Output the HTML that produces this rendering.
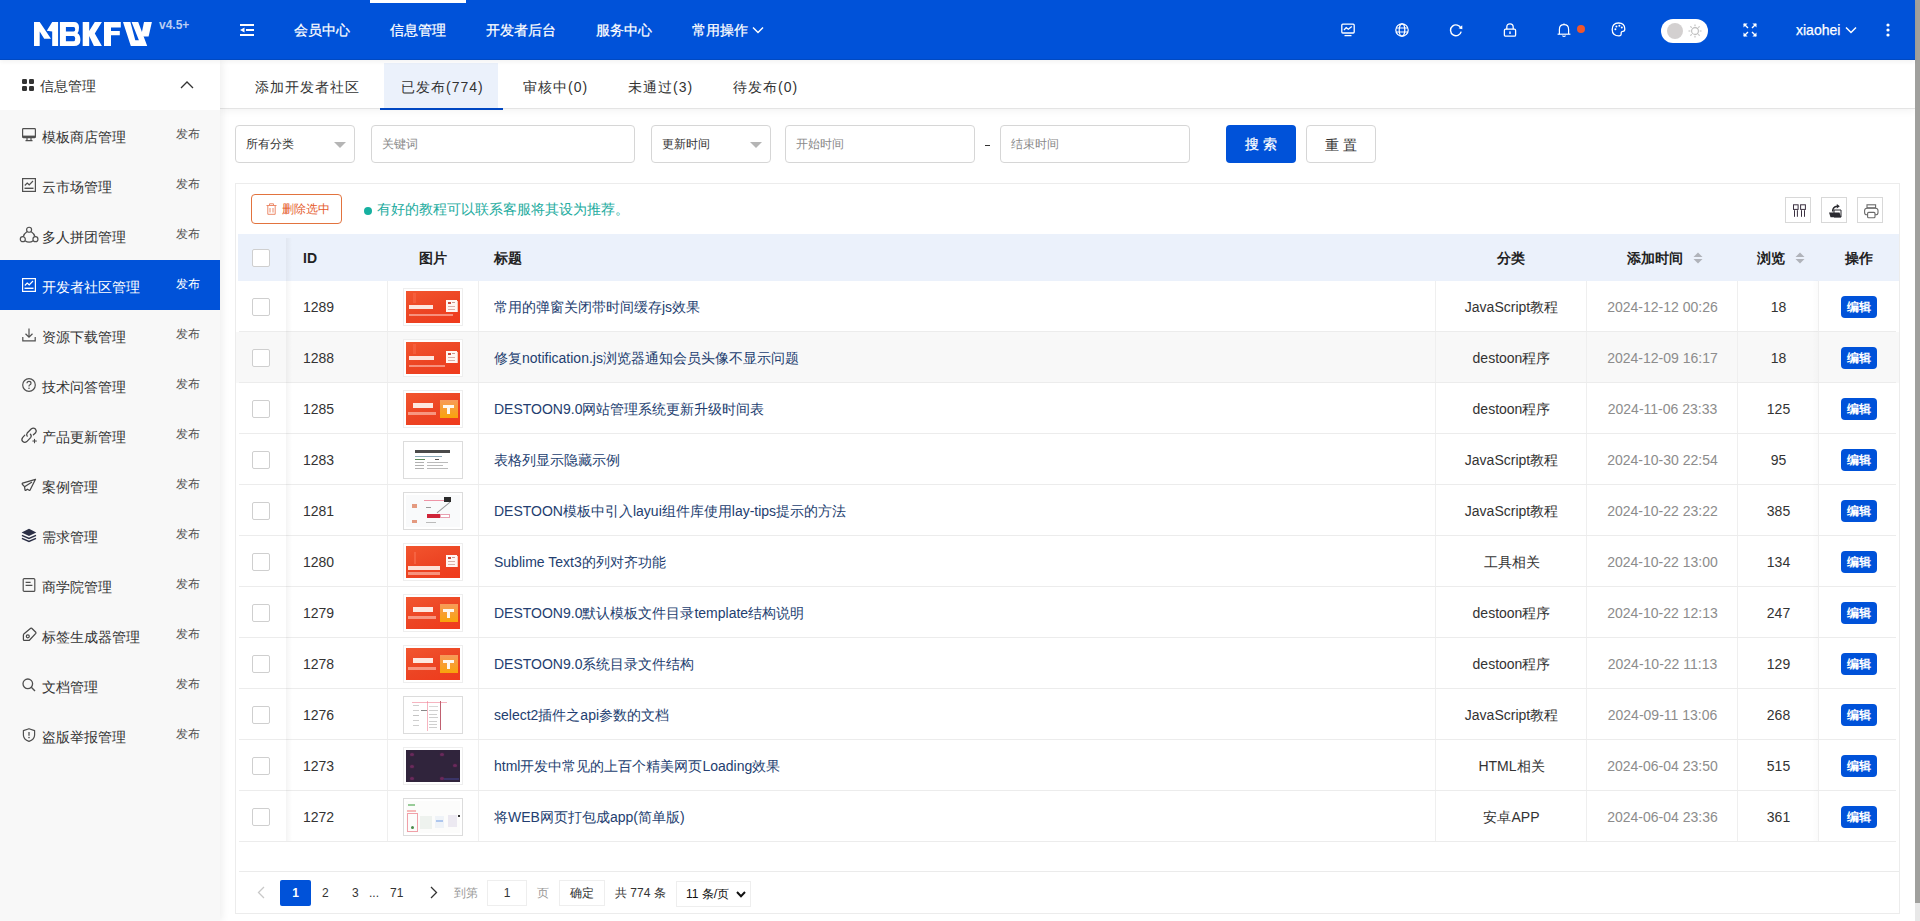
<!DOCTYPE html>
<html><head><meta charset="utf-8">
<style>
*{box-sizing:border-box;margin:0;padding:0}
html,body{width:1920px;height:921px;overflow:hidden;background:#fff;font-family:"Liberation Sans",sans-serif;font-size:14px;color:#333}
.abs{position:absolute}
#hdr{position:absolute;left:0;top:0;width:1915px;height:60px;background:#0052d9;color:#fff;z-index:10;box-shadow:inset 0 -1px 0 rgba(0,0,0,.1),0 2px 4px rgba(0,0,0,.05)}
#hdr .nav{position:absolute;top:0;height:60px;line-height:60px;white-space:nowrap;-webkit-text-stroke:0.25px #fff}
#sb{position:absolute;left:1915px;top:0;width:5px;height:921px;background:#e8e8e8}
#sb i{position:absolute;left:0;top:0;width:5px;height:903px;background:#a0a09d}
#side{position:absolute;left:0;top:60px;width:220px;height:861px;background:#f8f8f8;box-shadow:2px 0 8px rgba(0,0,0,.07);z-index:5}
.si{position:absolute;left:0;width:220px;height:50px}
.si .t{position:absolute;left:42px;top:2px;line-height:50px;font-size:14px;color:#333;white-space:nowrap}
.si .p{position:absolute;left:176px;top:2px;line-height:44px;font-size:12px;color:#555}
.si svg{position:absolute;left:22px;top:18px}
.si.on{background:#0052d9}
.si.on .t,.si.on .p{color:#fff}

#main{position:absolute;left:220px;top:60px;width:1695px;height:861px;background:#fff;overflow:hidden}
#tabs{position:absolute;left:0;top:0;width:1695px;height:49px;background:#fff;border-bottom:1px solid #e4e4e4;box-shadow:0 2px 8px rgba(0,0,0,.05)}
.tab{position:absolute;top:3px;line-height:48px;font-size:14px;letter-spacing:1px;color:#333;white-space:nowrap}
.inp{position:absolute;top:65px;height:38px;border:1px solid #d6d6d6;border-radius:4px;background:#fff;font-size:12px;line-height:36px;padding-left:10px;white-space:nowrap}
.inp.ph{color:#8a8a8a}
.caret{position:absolute;top:16px;width:0;height:0;border-left:6px solid transparent;border-right:6px solid transparent;border-top:6px solid #b5b5b5}
.btn{position:absolute;top:65px;height:38px;border-radius:4px;font-size:14px;line-height:36px;padding-top:1px;text-align:center;letter-spacing:4px;text-indent:4px}
#card{position:absolute;left:15px;top:123px;width:1665px;height:731px;border:1px solid #ececec;background:#fff}
.row{position:absolute;left:0;width:1663px;height:51px}
.row::after{content:'';position:absolute;left:3px;right:3px;bottom:0;height:1px;background:#ececec}
.c{position:absolute;top:1px;height:50px;line-height:50px;white-space:nowrap;font-size:14px}
.vl{position:absolute;top:0;width:1px;height:50px;background:#efefef}
.cb{position:absolute;left:16px;top:17px;width:18px;height:18px;border:1px solid #cfcfcf;border-radius:2px;background:#fff}
.th{position:absolute;top:1px;height:46px;line-height:46px;font-weight:bold;font-size:14px;color:#222;white-space:nowrap}
.edit{position:absolute;left:1605px;top:15px;width:36px;height:22px;border-radius:4px;background:#0052d9;color:#fff;font-size:12px;line-height:22px;text-align:center;font-weight:bold}
.thumb{position:absolute;left:167px;top:7px;width:60px;height:38px;border:1px solid #eee;background:#fff;padding:2px}
.thumb i{display:block;width:54px;height:32px;position:relative;overflow:hidden}
.tool{position:absolute;top:13px;width:26px;height:26px;border:1px solid #d8d8d8;background:#fff}
.sort{position:absolute;top:18px;width:10px;height:12px}
.pg{position:absolute;top:8px;height:26px;line-height:26px;font-size:12px;color:#333;white-space:nowrap}
</style></head><body>
<div id="hdr">
  <svg class="abs" style="left:0;top:0" width="200" height="60" viewBox="0 0 200 60">
    <g fill="#fff">
      <polygon points="34,22 39.7,22 51,38.8 44.2,38.8 39.7,31.5 39.7,46 34,46"/>
      <polygon points="46.8,30.8 52.2,22 58.1,22 58.1,46 52.2,46 52.2,31.5"/>
      <path d="M59.9,22 H74 Q79,22 79,27.5 Q79,31.5 77.5,33.3 Q80.4,35 80.4,40 Q80.4,46 74,46 H59.9 Z M65.9,27.1 V31.5 H73.6 Q75.2,31.5 75.2,29.3 Q75.2,27.1 73.6,27.1 Z M65.9,35.9 V41.3 H73.6 Q75.2,41.3 75.2,38.6 Q75.2,35.9 73.6,35.9 Z" fill-rule="evenodd"/>
      <polygon points="82.7,22 89.2,22 89.2,30.9 94.8,22 101.9,22 94.8,33.6 101.9,46 93.9,46 89.2,36 89.2,46 82.7,46"/>
      <polygon points="104,22 120.8,22 120.8,27.4 111,27.4 111,30.9 119.8,30.9 119.8,35.2 111,35.2 111,46 104,46"/>
      <polygon points="123,22 130.4,22 135.3,40.3 138.9,40.3 131.6,22 138.2,22 147.2,46 130.8,46"/>
      <polygon points="144,22 151.9,22 148.6,36.4 141,36.4"/>
    </g>
    <text x="159" y="29" font-family="Liberation Sans" font-size="12" font-weight="bold" fill="#b9cdf3">v4.5+</text>
  </svg>
  <svg class="abs" style="left:240px;top:24px" width="14" height="12" viewBox="0 0 14 12"><g fill="#fff"><rect x="0" y="0" width="14" height="2"/><rect x="6" y="5" width="8" height="2"/><rect x="0" y="10" width="14" height="2"/><polygon points="0,6 4.5,3.5 4.5,8.5"/></g></svg>
  <div class="abs" style="left:370px;top:0;width:96px;height:3px;background:#fff"></div>
  <div class="nav" style="left:294px">会员中心</div>
  <div class="nav" style="left:390px">信息管理</div>
  <div class="nav" style="left:486px">开发者后台</div>
  <div class="nav" style="left:596px">服务中心</div>
  <div class="nav" style="left:692px">常用操作</div>
  <svg class="abs" style="left:752px;top:26px" width="12" height="8" viewBox="0 0 12 8"><polyline points="1,1.5 6,6.5 11,1.5" fill="none" stroke="#fff" stroke-width="1.5"/></svg>
  <!-- right icons -->
  <svg class="abs" style="left:1341px;top:23px" width="14" height="14" viewBox="0 0 14 14"><g fill="none" stroke="#fff" stroke-width="1.3"><rect x="0.8" y="1.2" width="12.4" height="8.8" rx="1"/><polyline points="3,7 5.2,4.6 7.4,6.2 10.8,3.4"/><path d="M3.5,12.6 h7"/></g></svg>
  <svg class="abs" style="left:1395px;top:23px" width="14" height="14" viewBox="0 0 14 14"><g fill="none" stroke="#fff" stroke-width="1.2"><circle cx="7" cy="7" r="6.2"/><ellipse cx="7" cy="7" rx="2.8" ry="6.2"/><path d="M1,5 h12 M1,9 h12"/></g></svg>
  <svg class="abs" style="left:1449px;top:23px" width="14" height="14" viewBox="0 0 14 14"><g fill="none" stroke="#fff" stroke-width="1.4"><path d="M12,5.4 A5.4,5.4 0 1 0 12.2,8.6"/></g><polygon points="9.6,5.2 13.4,6.2 13.2,2.2" fill="#fff"/></svg>
  <svg class="abs" style="left:1503px;top:23px" width="14" height="14" viewBox="0 0 14 14"><g fill="none" stroke="#fff" stroke-width="1.3"><rect x="1.4" y="6.2" width="11.2" height="7" rx="1.2"/><path d="M3.8,6.2 V4.2 Q3.8,0.8 7,0.8 Q10.2,0.8 10.2,4.2 V6.2"/></g><rect x="6.3" y="8.4" width="1.4" height="2.6" fill="#fff"/></svg>
  <svg class="abs" style="left:1557px;top:23px" width="14" height="14" viewBox="0 0 14 14"><g fill="none" stroke="#fff" stroke-width="1.2"><path d="M2.4,11 V6.4 Q2.4,1.6 7,1.6 Q11.6,1.6 11.6,6.4 V11"/><path d="M0.6,11.2 h12.8"/><path d="M5.4,12.6 Q7,14 8.6,12.6"/><path d="M7,0.4 v1.2"/></g></svg>
  <div class="abs" style="left:1577px;top:25px;width:8px;height:8px;border-radius:50%;background:#f0562b"></div>
  <svg class="abs" style="left:1611px;top:22px" width="15" height="15" viewBox="0 0 15 15"><g fill="none" stroke="#fff" stroke-width="1.3"><path d="M7.5,1 Q13.8,1 13.8,7 Q13.8,9.4 12,9.4 Q10,9.4 10.2,11.4 Q10.4,13.8 8,13.8 Q1.2,13.8 1.2,7.4 Q1.2,1 7.5,1 Z"/></g><g fill="#fff"><circle cx="4.4" cy="7.2" r="1"/><circle cx="5.4" cy="4.4" r="1"/><circle cx="8.4" cy="3.8" r="1"/><circle cx="10.8" cy="5.6" r="1"/></g></svg>
  <div class="abs" style="left:1661px;top:19px;width:47px;height:24px;border-radius:12px;background:#fff"></div>
  <div class="abs" style="left:1667px;top:23px;width:16px;height:16px;border-radius:50%;background:#d3d0d0"></div>
  <svg class="abs" style="left:1688px;top:24px" width="14" height="14" viewBox="0 0 14 14"><g fill="none" stroke="#bdbdbd" stroke-width="1.1"><circle cx="7" cy="7" r="3.4"/><path d="M7,0.5 v1.8 M7,11.7 v1.8 M0.5,7 h1.8 M11.7,7 h1.8 M2.4,2.4 l1.3,1.3 M10.3,10.3 l1.3,1.3 M2.4,11.6 l1.3,-1.3 M10.3,3.7 l1.3,-1.3"/></g></svg>
  <svg class="abs" style="left:1743px;top:23px" width="14" height="14" viewBox="0 0 14 14"><g fill="none" stroke="#fff" stroke-width="1.4"><path d="M1,1 L5,5 M13,1 L9,5 M1,13 L5,9 M13,13 L9,9"/></g><g fill="#fff"><polygon points="0.5,0.5 4.6,0.5 0.5,4.6"/><polygon points="13.5,0.5 9.4,0.5 13.5,4.6"/><polygon points="0.5,13.5 4.6,13.5 0.5,9.4"/><polygon points="13.5,13.5 9.4,13.5 13.5,9.4"/></g></svg>
  <div class="nav" style="left:1796px">xiaohei</div>
  <svg class="abs" style="left:1845px;top:26px" width="12" height="8" viewBox="0 0 12 8"><polyline points="1,1.5 6,6.5 11,1.5" fill="none" stroke="#fff" stroke-width="1.5"/></svg>
  <svg class="abs" style="left:1886px;top:23px" width="4" height="14" viewBox="0 0 4 14"><g fill="#fff"><circle cx="2" cy="2" r="1.6"/><circle cx="2" cy="7" r="1.6"/><circle cx="2" cy="12" r="1.6"/></g></svg>
</div>
<div id="sb"><i></i></div>
<div id="side">
<div class="si" style="top:0;background:#fff"><svg width="12" height="12" viewBox="0 0 12 12" style="top:19px"><g fill="#333"><rect x="0" y="0" width="5" height="5" rx="1.2"/><rect x="7" y="0" width="5" height="5" rx="1.2"/><rect x="0" y="7" width="5" height="5" rx="1.2"/><rect x="7" y="7" width="5" height="5" rx="1.2"/></g></svg><div class="t" style="left:40px;top:1px">信息管理</div><svg width="14" height="8" viewBox="0 0 14 8" style="left:180px;top:21px"><polyline points="1,7 7,1 13,7" fill="none" stroke="#333" stroke-width="1.3"/></svg></div>
<div class="si" style="top:50px"><svg width="14" height="14" viewBox="0 0 14 14"><rect x="0.6" y="0.6" width="12.8" height="9" rx="0.8" fill="none" stroke="#505050" stroke-width="1.2"/><rect x="0.6" y="7.6" width="12.8" height="2" fill="#505050"/><path d="M5,10 v2.2 M9,10 v2.2 M3.5,12.6 h7" stroke="#505050" stroke-width="1.2"/></svg><div class="t">模板商店管理</div><div class="p">发布</div></div>
<div class="si" style="top:100px"><svg width="14" height="14" viewBox="0 0 14 14"><rect x="0.6" y="0.6" width="12.8" height="12.8" fill="none" stroke="#505050" stroke-width="1.2"/><polyline points="2.8,7.5 5.2,5 7.2,6.8 11,3" fill="none" stroke="#505050" stroke-width="1.2"/><rect x="2.5" y="9.6" width="9" height="1.4" fill="#505050"/></svg><div class="t">云市场管理</div><div class="p">发布</div></div>
<div class="si" style="top:150px"><svg width="20" height="18" viewBox="0 0 20 18" style="left:19px;top:16px"><g fill="none" stroke="#505050" stroke-width="1.2"><circle cx="10.1" cy="3.75" r="2.5"/><circle cx="3.8" cy="13.2" r="2.5"/><circle cx="16.45" cy="13.2" r="2.5"/><path d="M8.2,5.4 Q4.8,7.6 4.3,10.7 M12,5.4 Q15.4,7.6 15.9,10.7 M6,14.8 Q10.1,17.6 14.2,14.8"/></g></svg><div class="t">多人拼团管理</div><div class="p">发布</div></div>
<div class="si on" style="top:200px"><svg width="14" height="14" viewBox="0 0 14 14"><rect x="0.6" y="0.6" width="12.8" height="12.8" fill="none" stroke="#fff" stroke-width="1.2"/><polyline points="2.8,7.5 5.2,5 7.2,6.8 11,3" fill="none" stroke="#fff" stroke-width="1.2"/><rect x="2.5" y="9.6" width="9" height="1.4" fill="#fff"/></svg><div class="t">开发者社区管理</div><div class="p">发布</div></div>
<div class="si" style="top:250px"><svg width="14" height="14" viewBox="0 0 14 14"><path d="M7,0.5 v8.5 M3.5,5.8 L7,9.2 L10.5,5.8 M0.8,9 v3.8 h12.4 v-3.8" fill="none" stroke="#505050" stroke-width="1.2"/></svg><div class="t">资源下载管理</div><div class="p">发布</div></div>
<div class="si" style="top:300px"><svg width="14" height="14" viewBox="0 0 14 14"><circle cx="7" cy="7" r="6.3" fill="none" stroke="#505050" stroke-width="1.2"/><path d="M5,5.3 Q5,3.4 7,3.4 Q9,3.4 9,5.2 Q9,6.4 7.6,7 Q7,7.3 7,8.4" fill="none" stroke="#505050" stroke-width="1.2"/><circle cx="7" cy="10.3" r="0.8" fill="#505050"/></svg><div class="t">技术问答管理</div><div class="p">发布</div></div>
<div class="si" style="top:350px"><svg width="26" height="26" viewBox="0 0 26 26" style="left:16px;top:14px"><g fill="none" stroke="#484848" stroke-width="1.25" stroke-linecap="round"><path d="M11.2,12.2 Q10,10.6 11.2,9 L15.4,4.8 Q17.4,3.2 19.4,5 Q21,7 19.6,8.8 L17.4,10.8"/><path d="M8.8,11.2 L6.6,13.6 Q5,15.8 6.8,17.6 Q8.8,19.2 10.8,17.6 L14.6,13.6 Q16,11.8 14.4,10.2"/><path d="M18.5,15.2 V18.8 M16.8,17 H20.4" stroke-width="1.1"/></g></svg><div class="t">产品更新管理</div><div class="p">发布</div></div>
<div class="si" style="top:400px"><svg width="26" height="26" viewBox="0 0 26 26" style="left:16px;top:12px"><g fill="none" stroke="#484848" stroke-width="1.25" stroke-linejoin="round"><path d="M19.5,7.3 L6.6,11.1 Q5.8,11.6 6.5,12.5 L8.5,14.6 L9,17.9 Q9.3,18.6 10,18.2 L11.3,17.2 L13.2,18.3 Q13.8,18.6 14.1,18 Z"/><path d="M8.6,14.7 L16,10"/></g></svg><div class="t">案例管理</div><div class="p">发布</div></div>
<div class="si" style="top:450px"><svg width="26" height="26" viewBox="0 0 26 26" style="left:16px;top:12px"><polygon points="5.6,10.4 13,6.8 20.3,10.4 13,13.9" fill="#2b2f45"/><g fill="none" stroke="#2b2f45" stroke-width="1.4"><polyline points="5.9,13.3 13,16.5 20,13.3"/><polyline points="5.9,16.3 13,19.5 20,16.3"/></g></svg><div class="t">需求管理</div><div class="p">发布</div></div>
<div class="si" style="top:500px"><svg width="14" height="14" viewBox="0 0 14 14"><rect x="1.2" y="0.6" width="11.6" height="12.8" rx="1" fill="none" stroke="#505050" stroke-width="1.2"/><path d="M3.6,4.4 h5 M3.6,7.4 h6.8" stroke="#505050" stroke-width="1.2"/></svg><div class="t">商学院管理</div><div class="p">发布</div></div>
<div class="si" style="top:550px"><svg width="26" height="26" viewBox="0 0 26 26" style="left:16px;top:12px"><g fill="none" stroke="#484848" stroke-width="1.25" stroke-linejoin="round"><path d="M14.7,6.3 Q15.2,5.9 15.7,6.3 L19.8,10.3 Q20.2,10.8 19.8,11.3 L13.6,18 Q13.3,18.4 12.8,18.4 L8.3,18.4 Q7.4,18.4 7.4,17.5 L7.4,13 Q7.4,12.5 7.8,12.1 Z"/><circle cx="11.8" cy="14.3" r="1.5"/></g></svg><div class="t">标签生成器管理</div><div class="p">发布</div></div>
<div class="si" style="top:600px"><svg width="14" height="14" viewBox="0 0 14 14"><circle cx="5.8" cy="5.8" r="4.8" fill="none" stroke="#505050" stroke-width="1.3"/><path d="M9.3,9.3 L13,13" stroke="#505050" stroke-width="1.4"/></svg><div class="t">文档管理</div><div class="p">发布</div></div>
<div class="si" style="top:650px"><svg width="14" height="14" viewBox="0 0 14 14"><path d="M7,0.7 L12.6,2.6 V7 Q12.6,11.4 7,13.4 Q1.4,11.4 1.4,7 V2.6 Z" fill="none" stroke="#505050" stroke-width="1.2" stroke-linejoin="round"/><path d="M7,4 v3.8" stroke="#505050" stroke-width="1.3"/><circle cx="7" cy="9.6" r="0.8" fill="#505050"/></svg><div class="t">盗版举报管理</div><div class="p">发布</div></div>
</div>
<div id="main">
<div id="tabs">
<div class="abs" style="left:164px;top:3px;width:114px;height:45px;background:#ebf1fb"></div>
<div class="abs" style="left:160px;top:48px;width:123px;height:2px;background:#0047c2;z-index:2"></div>
<div class="tab" style="left:35px">添加开发者社区</div>
<div class="tab" style="left:181px">已发布(774)</div>
<div class="tab" style="left:303px">审核中(0)</div>
<div class="tab" style="left:408px">未通过(3)</div>
<div class="tab" style="left:513px">待发布(0)</div>
</div>
<div class="inp" style="left:15px;width:120px">所有分类<i class="caret" style="left:98px"></i></div>
<div class="inp ph" style="left:151px;width:264px">关键词</div>
<div class="inp" style="left:431px;width:120px">更新时间<i class="caret" style="left:98px"></i></div>
<div class="inp ph" style="left:565px;width:190px">开始时间</div>
<div class="abs" style="left:765px;top:85px;width:5px;height:1px;background:#333"></div>
<div class="inp ph" style="left:780px;width:190px">结束时间</div>
<div class="btn" style="left:1006px;width:70px;background:#0052d9;color:#fff;-webkit-text-stroke:0.2px #fff">搜索</div>
<div class="btn" style="left:1086px;width:70px;border:1px solid #d6d6d6;color:#333;background:#fff">重置</div>
<div id="card"><div class="abs" style="left:15px;top:10px;width:91px;height:30px;border:1px solid #e2733e;border-radius:4px;color:#e55a2b;font-size:12px;line-height:28px;white-space:nowrap"><svg class="abs" style="left:14px;top:8px" width="11" height="12" viewBox="0 0 11 12"><g fill="none" stroke="#ec8a6a" stroke-width="1"><path d="M0.5,2.5 h10 M3.5,2.5 V0.8 h4 V2.5 M1.8,2.5 V11.3 h7.4 V2.5 M4,5 v4.5 M7,5 v4.5"/></g></svg><span class="abs" style="left:30px">删除选中</span></div>
<div class="abs" style="left:128px;top:23px;width:8px;height:8px;border-radius:50%;background:#16b0a0"></div>
<div class="abs" style="left:141px;top:10px;line-height:31px;color:#22ab9e;font-size:14px;white-space:nowrap">有好的教程可以联系客服将其设为推荐。</div>
<div class="tool" style="left:1549px"><svg class="abs" style="left:4px;top:3px" width="18" height="18" viewBox="0 0 18 18"><g fill="none" stroke="#3a3040" stroke-width="1"><rect x="3.5" y="3.8" width="4.6" height="4.6"/><rect x="10.6" y="3.8" width="4.8" height="4.6"/><path d="M4.5,9.2 v6.6 M7.4,9.2 v6.6 M11.5,9.2 v6.6 M14.5,9.2 v6.6"/></g></svg></div>
<div class="tool" style="left:1585px"><svg class="abs" style="left:4px;top:3px" width="18" height="18" viewBox="0 0 18 18"><g fill="#2a2a30"><path d="M8,9 h7 v7 h-7z" fill="none" stroke="#2a2a30" stroke-width="1"/><polygon points="3,11.5 13.5,11.5 15.2,16.2 4.5,16.2"/></g><path d="M6.6,10.5 Q6.8,5.6 11.2,5.2" fill="none" stroke="#2a2a30" stroke-width="1.5"/><polygon points="10.8,3 13.8,5.2 10.8,7.4" fill="#2a2a30"/></svg></div>
<div class="tool" style="left:1621px"><svg class="abs" style="left:4px;top:3px" width="18" height="18" viewBox="0 0 18 18"><g fill="none" stroke="#6a6a6a" stroke-width="1.1"><rect x="5" y="3.8" width="8.6" height="3"/><rect x="2.6" y="7.2" width="13.4" height="6.6" rx="2.4"/><rect x="5.6" y="11.4" width="7.4" height="5.4" rx="1" fill="#fff"/></g></svg></div>
<div class="abs" style="left:2px;top:50px;width:1661px;height:47px;background:#ebf1fb">
<div class="cb" style="top:15px;left:14px"></div>
<div class="th" style="left:65px">ID</div>
<div class="th" style="left:181px">图片</div>
<div class="th" style="left:256px">标题</div>
<div class="th" style="left:1259px">分类</div>
<div class="th" style="left:1389px">添加时间</div>
<svg class="sort" style="left:1455px" viewBox="0 0 10 12"><polygon points="5,0.5 9.5,5 0.5,5" fill="#b0b3ba"/><polygon points="5,11.5 9.5,7 0.5,7" fill="#b0b3ba"/></svg>
<div class="th" style="left:1519px">浏览</div>
<svg class="sort" style="left:1557px" viewBox="0 0 10 12"><polygon points="5,0.5 9.5,5 0.5,5" fill="#b0b3ba"/><polygon points="5,11.5 9.5,7 0.5,7" fill="#b0b3ba"/></svg>
<div class="th" style="left:1607px">操作</div>
</div>
<div class="row" style="top:97px;background:#fff">
<div class="cb"></div>
<div class="vl" style="left:151px"></div>
<div class="vl" style="left:242px"></div>
<div class="vl" style="left:1199px"></div>
<div class="vl" style="left:1350px"></div>
<div class="vl" style="left:1501px"></div>
<div class="vl" style="left:1582px"></div>
<div class="c" style="left:67px;color:#333">1289</div>
<div class="thumb"><i style="background:linear-gradient(160deg,#f2552e 0%,#ec4423 55%,#f03a1c 100%)"><b class="abs" style="left:3px;top:14px;width:24px;height:4px;background:#fde6de;"></b><b class="abs" style="left:3px;top:23px;width:44px;height:1.5px;background:rgba(255,210,200,.55);"></b><b class="abs" style="left:40px;top:9px;width:11px;height:12px;background:#fff6f2;"></b><b class="abs" style="left:42px;top:11px;width:3px;height:2px;background:#c84a3a;"></b><b class="abs" style="left:46px;top:11px;width:3px;height:1px;background:#c89a90;"></b><b class="abs" style="left:42px;top:15px;width:7px;height:1px;background:#d8b0a8;"></b><b class="abs" style="left:42px;top:18px;width:7px;height:1px;background:#d8b0a8;"></b><b class="abs" style="left:51px;top:10px;width:1px;height:11px;background:#f7c8b8;"></b><b class="abs" style="left:7px;top:2px;width:3px;height:10px;background:rgba(255,120,90,.35);"></b></i></div>
<div class="c" style="left:258px;color:#233e70">常用的弹窗关闭带时间缓存js效果</div>
<div class="c" style="left:1200px;width:151px;text-align:center;color:#333">JavaScript教程</div>
<div class="c" style="left:1351px;width:151px;text-align:center;color:#8c8c8c">2024-12-12 00:26</div>
<div class="c" style="left:1502px;width:81px;text-align:center;color:#333">18</div>
<div class="edit">编辑</div>
</div>
<div class="row" style="top:148px;background:#f8f8f8">
<div class="cb"></div>
<div class="vl" style="left:151px"></div>
<div class="vl" style="left:242px"></div>
<div class="vl" style="left:1199px"></div>
<div class="vl" style="left:1350px"></div>
<div class="vl" style="left:1501px"></div>
<div class="vl" style="left:1582px"></div>
<div class="c" style="left:67px;color:#333">1288</div>
<div class="thumb"><i style="background:linear-gradient(160deg,#f2552e 0%,#ec4423 55%,#f03a1c 100%)"><b class="abs" style="left:3px;top:14px;width:25px;height:4px;background:#fde6de;"></b><b class="abs" style="left:3px;top:23px;width:36px;height:1.5px;background:rgba(255,210,200,.55);"></b><b class="abs" style="left:40px;top:9px;width:11px;height:12px;background:#fff6f2;"></b><b class="abs" style="left:42px;top:11px;width:3px;height:2px;background:#c84a3a;"></b><b class="abs" style="left:46px;top:11px;width:3px;height:1px;background:#c89a90;"></b><b class="abs" style="left:42px;top:15px;width:7px;height:1px;background:#d8b0a8;"></b><b class="abs" style="left:42px;top:18px;width:7px;height:1px;background:#d8b0a8;"></b><b class="abs" style="left:51px;top:10px;width:1px;height:11px;background:#f7c8b8;"></b><b class="abs" style="left:7px;top:2px;width:3px;height:10px;background:rgba(255,120,90,.35);"></b></i></div>
<div class="c" style="left:258px;color:#233e70">修复notification.js浏览器通知会员头像不显示问题</div>
<div class="c" style="left:1200px;width:151px;text-align:center;color:#333">destoon程序</div>
<div class="c" style="left:1351px;width:151px;text-align:center;color:#8c8c8c">2024-12-09 16:17</div>
<div class="c" style="left:1502px;width:81px;text-align:center;color:#333">18</div>
<div class="edit">编辑</div>
</div>
<div class="row" style="top:199px;background:#fff">
<div class="cb"></div>
<div class="vl" style="left:151px"></div>
<div class="vl" style="left:242px"></div>
<div class="vl" style="left:1199px"></div>
<div class="vl" style="left:1350px"></div>
<div class="vl" style="left:1501px"></div>
<div class="vl" style="left:1582px"></div>
<div class="c" style="left:67px;color:#333">1285</div>
<div class="thumb"><i style="background:linear-gradient(160deg,#f2552e 0%,#ec4423 55%,#f03a1c 100%)"><b class="abs" style="left:7px;top:10px;width:20px;height:5px;background:#fde8e0;"></b><b class="abs" style="left:2px;top:19px;width:28px;height:2.5px;background:rgba(255,205,190,.6);"></b><b class="abs" style="left:34px;top:7px;width:18px;height:18px;background:linear-gradient(180deg,#f79a5a,#f9a30a);"></b><b class="abs" style="left:37px;top:12px;width:11px;height:3px;background:#fff7ee;"></b><b class="abs" style="left:41px;top:12px;width:3px;height:9px;background:#fff7ee;"></b></i></div>
<div class="c" style="left:258px;color:#233e70">DESTOON9.0网站管理系统更新升级时间表</div>
<div class="c" style="left:1200px;width:151px;text-align:center;color:#333">destoon程序</div>
<div class="c" style="left:1351px;width:151px;text-align:center;color:#8c8c8c">2024-11-06 23:33</div>
<div class="c" style="left:1502px;width:81px;text-align:center;color:#333">125</div>
<div class="edit">编辑</div>
</div>
<div class="row" style="top:250px;background:#fff">
<div class="cb"></div>
<div class="vl" style="left:151px"></div>
<div class="vl" style="left:242px"></div>
<div class="vl" style="left:1199px"></div>
<div class="vl" style="left:1350px"></div>
<div class="vl" style="left:1501px"></div>
<div class="vl" style="left:1582px"></div>
<div class="c" style="left:67px;color:#333">1283</div>
<div class="thumb" style="border-color:#dcdcdc"><i style="background:#fff"><b class="abs" style="left:9px;top:5.5px;width:35px;height:3px;background:#4a4a4a;"></b><b class="abs" style="left:9px;top:12px;width:27px;height:1px;background:#8aa8b8;"></b><b class="abs" style="left:9px;top:15px;width:10px;height:1px;background:#5a8a5a;"></b><b class="abs" style="left:29px;top:15px;width:4px;height:1px;background:#555;"></b><b class="abs" style="left:9px;top:18px;width:9px;height:1px;background:#b0b0b0;"></b><b class="abs" style="left:21px;top:18px;width:21px;height:1px;background:#bbb;"></b><b class="abs" style="left:9px;top:21px;width:9px;height:1px;background:#b0b0b0;"></b><b class="abs" style="left:21px;top:21px;width:16px;height:1px;background:#bbb;"></b><b class="abs" style="left:9px;top:24px;width:9px;height:1px;background:#b0b0b0;"></b><b class="abs" style="left:21px;top:24px;width:21px;height:1px;background:#bbb;"></b></i></div>
<div class="c" style="left:258px;color:#233e70">表格列显示隐藏示例</div>
<div class="c" style="left:1200px;width:151px;text-align:center;color:#333">JavaScript教程</div>
<div class="c" style="left:1351px;width:151px;text-align:center;color:#8c8c8c">2024-10-30 22:54</div>
<div class="c" style="left:1502px;width:81px;text-align:center;color:#333">95</div>
<div class="edit">编辑</div>
</div>
<div class="row" style="top:301px;background:#fff">
<div class="cb"></div>
<div class="vl" style="left:151px"></div>
<div class="vl" style="left:242px"></div>
<div class="vl" style="left:1199px"></div>
<div class="vl" style="left:1350px"></div>
<div class="vl" style="left:1501px"></div>
<div class="vl" style="left:1582px"></div>
<div class="c" style="left:67px;color:#333">1281</div>
<div class="thumb" style="border-color:#dcdcdc"><i style="background:#f9fafb"><b class="abs" style="left:38px;top:2px;width:7px;height:5px;background:#2a2a2a;"></b><b class="abs" style="left:18px;top:4.5px;width:20px;height:1px;background:rgba(230,80,110,.6);"></b><b class="abs" style="left:21px;top:19px;width:13px;height:4px;background:#cf2438;"></b><b class="abs" style="left:34px;top:19px;width:10px;height:4px;background:#fff;box-shadow:inset 0 0 0 1px #e8a0b0"></b><b class="abs" style="left:6px;top:9px;width:5px;height:3.5px;background:#e49a80;"></b><b class="abs" style="left:6px;top:24.5px;width:5px;height:3.5px;background:#e49a80;"></b><b class="abs" style="left:20px;top:12px;width:5px;height:1px;background:#999;"></b><b class="abs" style="left:20px;top:27px;width:10px;height:1px;background:#bbb;"></b><b class="abs" style="left:29px;top:12px;width:17px;height:1px;background:#555;transform:rotate(-40deg);opacity:.6"></b></i></div>
<div class="c" style="left:258px;color:#233e70">DESTOON模板中引入layui组件库使用lay-tips提示的方法</div>
<div class="c" style="left:1200px;width:151px;text-align:center;color:#333">JavaScript教程</div>
<div class="c" style="left:1351px;width:151px;text-align:center;color:#8c8c8c">2024-10-22 23:22</div>
<div class="c" style="left:1502px;width:81px;text-align:center;color:#333">385</div>
<div class="edit">编辑</div>
</div>
<div class="row" style="top:352px;background:#fff">
<div class="cb"></div>
<div class="vl" style="left:151px"></div>
<div class="vl" style="left:242px"></div>
<div class="vl" style="left:1199px"></div>
<div class="vl" style="left:1350px"></div>
<div class="vl" style="left:1501px"></div>
<div class="vl" style="left:1582px"></div>
<div class="c" style="left:67px;color:#333">1280</div>
<div class="thumb"><i style="background:linear-gradient(160deg,#f2552e 0%,#ec4423 55%,#f03a1c 100%)"><b class="abs" style="left:2px;top:20px;width:32px;height:4px;background:#fde0d6;"></b><b class="abs" style="left:2px;top:26px;width:32px;height:2.5px;background:rgba(255,200,185,.6);"></b><b class="abs" style="left:40px;top:9px;width:11px;height:12px;background:#fff6f2;"></b><b class="abs" style="left:42px;top:11px;width:3px;height:2px;background:#c84a3a;"></b><b class="abs" style="left:46px;top:11px;width:3px;height:1px;background:#c89a90;"></b><b class="abs" style="left:42px;top:15px;width:7px;height:1px;background:#d8b0a8;"></b><b class="abs" style="left:42px;top:18px;width:7px;height:1px;background:#d8b0a8;"></b><b class="abs" style="left:51px;top:10px;width:1px;height:11px;background:#f7c8b8;"></b><b class="abs" style="left:8px;top:6px;width:2px;height:12px;background:rgba(255,130,100,.4);"></b></i></div>
<div class="c" style="left:258px;color:#233e70">Sublime Text3的列对齐功能</div>
<div class="c" style="left:1200px;width:151px;text-align:center;color:#333">工具相关</div>
<div class="c" style="left:1351px;width:151px;text-align:center;color:#8c8c8c">2024-10-22 13:00</div>
<div class="c" style="left:1502px;width:81px;text-align:center;color:#333">134</div>
<div class="edit">编辑</div>
</div>
<div class="row" style="top:403px;background:#fff">
<div class="cb"></div>
<div class="vl" style="left:151px"></div>
<div class="vl" style="left:242px"></div>
<div class="vl" style="left:1199px"></div>
<div class="vl" style="left:1350px"></div>
<div class="vl" style="left:1501px"></div>
<div class="vl" style="left:1582px"></div>
<div class="c" style="left:67px;color:#333">1279</div>
<div class="thumb"><i style="background:linear-gradient(160deg,#f2552e 0%,#ec4423 55%,#f03a1c 100%)"><b class="abs" style="left:7px;top:10px;width:20px;height:5px;background:#fde8e0;"></b><b class="abs" style="left:2px;top:19px;width:28px;height:2.5px;background:rgba(255,205,190,.6);"></b><b class="abs" style="left:34px;top:7px;width:18px;height:18px;background:linear-gradient(180deg,#f79a5a,#f9a30a);"></b><b class="abs" style="left:37px;top:12px;width:11px;height:3px;background:#fff7ee;"></b><b class="abs" style="left:41px;top:12px;width:3px;height:9px;background:#fff7ee;"></b></i></div>
<div class="c" style="left:258px;color:#233e70">DESTOON9.0默认模板文件目录template结构说明</div>
<div class="c" style="left:1200px;width:151px;text-align:center;color:#333">destoon程序</div>
<div class="c" style="left:1351px;width:151px;text-align:center;color:#8c8c8c">2024-10-22 12:13</div>
<div class="c" style="left:1502px;width:81px;text-align:center;color:#333">247</div>
<div class="edit">编辑</div>
</div>
<div class="row" style="top:454px;background:#fff">
<div class="cb"></div>
<div class="vl" style="left:151px"></div>
<div class="vl" style="left:242px"></div>
<div class="vl" style="left:1199px"></div>
<div class="vl" style="left:1350px"></div>
<div class="vl" style="left:1501px"></div>
<div class="vl" style="left:1582px"></div>
<div class="c" style="left:67px;color:#333">1278</div>
<div class="thumb"><i style="background:linear-gradient(160deg,#f2552e 0%,#ec4423 55%,#f03a1c 100%)"><b class="abs" style="left:7px;top:10px;width:20px;height:5px;background:#fde8e0;"></b><b class="abs" style="left:2px;top:19px;width:28px;height:2.5px;background:rgba(255,205,190,.6);"></b><b class="abs" style="left:34px;top:7px;width:18px;height:18px;background:linear-gradient(180deg,#f79a5a,#f9a30a);"></b><b class="abs" style="left:37px;top:12px;width:11px;height:3px;background:#fff7ee;"></b><b class="abs" style="left:41px;top:12px;width:3px;height:9px;background:#fff7ee;"></b></i></div>
<div class="c" style="left:258px;color:#233e70">DESTOON9.0系统目录文件结构</div>
<div class="c" style="left:1200px;width:151px;text-align:center;color:#333">destoon程序</div>
<div class="c" style="left:1351px;width:151px;text-align:center;color:#8c8c8c">2024-10-22 11:13</div>
<div class="c" style="left:1502px;width:81px;text-align:center;color:#333">129</div>
<div class="edit">编辑</div>
</div>
<div class="row" style="top:505px;background:#fff">
<div class="cb"></div>
<div class="vl" style="left:151px"></div>
<div class="vl" style="left:242px"></div>
<div class="vl" style="left:1199px"></div>
<div class="vl" style="left:1350px"></div>
<div class="vl" style="left:1501px"></div>
<div class="vl" style="left:1582px"></div>
<div class="c" style="left:67px;color:#333">1276</div>
<div class="thumb" style="border-color:#dcdcdc"><i style="background:#fff"><b class="abs" style="left:6px;top:3px;width:35px;height:1px;background:rgba(240,130,150,.6);"></b><b class="abs" style="left:21px;top:2px;width:1px;height:30px;background:rgba(240,120,140,.55);"></b><b class="abs" style="left:34px;top:2px;width:1px;height:29px;background:#c06070;"></b><b class="abs" style="left:7px;top:6px;width:6px;height:1px;background:#cfcfcf;"></b><b class="abs" style="left:7px;top:11px;width:6px;height:1px;background:#cfcfcf;"></b><b class="abs" style="left:7px;top:16px;width:6px;height:1px;background:#c4c4c4;"></b><b class="abs" style="left:7px;top:21px;width:6px;height:1px;background:#cfcfcf;"></b><b class="abs" style="left:7px;top:26px;width:6px;height:1px;background:#cfcfcf;"></b><b class="abs" style="left:23px;top:7px;width:9px;height:1px;background:#d8d8d8;"></b><b class="abs" style="left:23px;top:11px;width:9px;height:1px;background:#cfcfcf;"></b><b class="abs" style="left:23px;top:15px;width:8px;height:1px;background:#cfcfcf;"></b><b class="abs" style="left:23px;top:18px;width:9px;height:1px;background:#cfcfcf;"></b><b class="abs" style="left:23px;top:22px;width:8px;height:1px;background:#cfcfcf;"></b><b class="abs" style="left:23px;top:25px;width:8px;height:1px;background:#cfcfcf;"></b><b class="abs" style="left:23px;top:28px;width:8px;height:1px;background:#cfcfcf;"></b><b class="abs" style="left:15px;top:11px;width:6px;height:1px;background:#888;"></b></i></div>
<div class="c" style="left:258px;color:#233e70">select2插件之api参数的文档</div>
<div class="c" style="left:1200px;width:151px;text-align:center;color:#333">JavaScript教程</div>
<div class="c" style="left:1351px;width:151px;text-align:center;color:#8c8c8c">2024-09-11 13:06</div>
<div class="c" style="left:1502px;width:81px;text-align:center;color:#333">268</div>
<div class="edit">编辑</div>
</div>
<div class="row" style="top:556px;background:#fff">
<div class="cb"></div>
<div class="vl" style="left:151px"></div>
<div class="vl" style="left:242px"></div>
<div class="vl" style="left:1199px"></div>
<div class="vl" style="left:1350px"></div>
<div class="vl" style="left:1501px"></div>
<div class="vl" style="left:1582px"></div>
<div class="c" style="left:67px;color:#333">1273</div>
<div class="thumb"><i style="background:#30243c"><b class="abs" style="left:4px;top:3px;width:4px;height:3px;border-radius:50%;background:#6a2a5c;box-shadow:0 0 2px #5a2450"></b><b class="abs" style="left:34px;top:3px;width:4px;height:3px;border-radius:50%;background:#6a2a5c;box-shadow:0 0 2px #5a2450"></b><b class="abs" style="left:4px;top:15px;width:4px;height:3px;border-radius:50%;background:#6a2a5c;box-shadow:0 0 2px #5a2450"></b><b class="abs" style="left:47px;top:14px;width:4px;height:3px;border-radius:50%;background:#6a2a5c;box-shadow:0 0 2px #5a2450"></b><b class="abs" style="left:4px;top:27px;width:4px;height:3px;border-radius:50%;background:#6a2a5c;box-shadow:0 0 2px #5a2450"></b><b class="abs" style="left:34px;top:27px;width:4px;height:3px;border-radius:50%;background:#6a2a5c;box-shadow:0 0 2px #5a2450"></b><b class="abs" style="left:38px;top:28px;width:15px;height:2px;background:#3a3468;"></b></i></div>
<div class="c" style="left:258px;color:#233e70">html开发中常见的上百个精美网页Loading效果</div>
<div class="c" style="left:1200px;width:151px;text-align:center;color:#333">HTML相关</div>
<div class="c" style="left:1351px;width:151px;text-align:center;color:#8c8c8c">2024-06-04 23:50</div>
<div class="c" style="left:1502px;width:81px;text-align:center;color:#333">515</div>
<div class="edit">编辑</div>
</div>
<div class="row" style="top:607px;background:#fff">
<div class="cb"></div>
<div class="vl" style="left:151px"></div>
<div class="vl" style="left:242px"></div>
<div class="vl" style="left:1199px"></div>
<div class="vl" style="left:1350px"></div>
<div class="vl" style="left:1501px"></div>
<div class="vl" style="left:1582px"></div>
<div class="c" style="left:67px;color:#333">1272</div>
<div class="thumb" style="border-color:#dcdcdc"><i style="background:#fcfcfb"><b class="abs" style="left:2px;top:3px;width:7px;height:1.5px;background:#9c9;"></b><b class="abs" style="left:1px;top:9px;width:9px;height:2px;background:rgba(240,120,120,.5);"></b><b class="abs" style="left:1px;top:12px;width:11px;height:19px;background:transparent;box-shadow:inset 0 0 0 1px #f0a0a8"></b><b class="abs" style="left:5px;top:25px;width:3px;height:3px;background:#4a8a4a;border-radius:50%"></b><b class="abs" style="left:14px;top:15px;width:12px;height:13px;background:#eef2ee;"></b><b class="abs" style="left:30px;top:19px;width:7px;height:2px;background:#5a8ee0;"></b><b class="abs" style="left:29px;top:15px;width:9px;height:12px;background:rgba(230,236,246,.6);"></b><b class="abs" style="left:42px;top:14px;width:9px;height:12px;background:#ece9f1;"></b><b class="abs" style="left:52px;top:14px;width:1.5px;height:1.5px;background:#333;"></b></i></div>
<div class="c" style="left:258px;color:#233e70">将WEB网页打包成app(简单版)</div>
<div class="c" style="left:1200px;width:151px;text-align:center;color:#333">安卓APP</div>
<div class="c" style="left:1351px;width:151px;text-align:center;color:#8c8c8c">2024-06-04 23:36</div>
<div class="c" style="left:1502px;width:81px;text-align:center;color:#333">361</div>
<div class="edit">编辑</div>
</div>
<div class="abs" style="left:50px;top:54px;width:6px;height:603px;background:linear-gradient(90deg,rgba(0,0,0,.045),rgba(0,0,0,0))"></div>
<div class="abs" style="left:1576px;top:96px;width:6px;height:561px;background:linear-gradient(270deg,rgba(0,0,0,.015),rgba(0,0,0,0))"></div>
<div class="abs" style="left:3px;top:687px;width:1660px;height:1px;background:#ebebeb"></div>
<div class="abs" style="left:0;top:688px;width:1663px;height:42px">
<svg class="abs" style="left:21px;top:14px" width="8" height="13" viewBox="0 0 8 13"><polyline points="7,1 1.5,6.5 7,12" fill="none" stroke="#c8c8c8" stroke-width="1.3"/></svg>
<div class="pg" style="left:44px;width:31px;background:#0052d9;color:#fff;text-align:center;border-radius:2px;font-weight:bold">1</div>
<div class="pg" style="left:86px;width:10px">2</div>
<div class="pg" style="left:116px;width:10px">3</div>
<div class="pg" style="left:133px">...</div>
<div class="pg" style="left:154px">71</div>
<svg class="abs" style="left:194px;top:14px" width="8" height="13" viewBox="0 0 8 13"><polyline points="1,1 6.5,6.5 1,12" fill="none" stroke="#333" stroke-width="1.3"/></svg>
<div class="pg" style="left:218px;color:#999">到第</div>
<div class="pg" style="left:251px;width:40px;border:1px solid #eee;text-align:center;line-height:24px">1</div>
<div class="pg" style="left:301px;color:#999">页</div>
<div class="pg" style="left:323px;width:46px;border:1px solid #eee;text-align:center;line-height:24px">确定</div>
<div class="pg" style="left:379px">共 774 条</div>
<div class="pg" style="left:440px;top:9px;width:75px;border:1px solid #eee;line-height:24px;padding-left:9px;font-size:12px;color:#111">11 条/页<svg class="abs" style="left:59px;top:9px" width="10" height="7" viewBox="0 0 10 7"><polyline points="1,1 5,5.2 9,1" fill="none" stroke="#111" stroke-width="2"/></svg></div>
</div></div>
</div>
</body></html>
